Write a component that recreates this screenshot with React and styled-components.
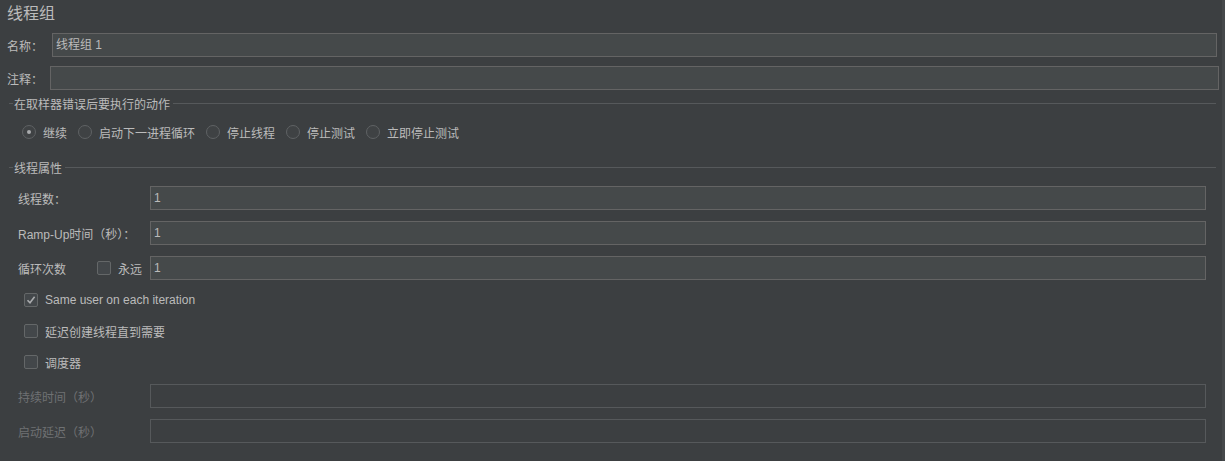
import React from "react";
import styled, { createGlobalStyle } from "styled-components";

const Global = createGlobalStyle`
  html, body { margin: 0; padding: 0; background: #3c3f41; }
  body {
    font-family: "Liberation Sans", "Noto Sans CJK SC", sans-serif;
    font-size: 12px;
    color: #bbbbbb;
  }
`;

const Page = styled.div`
  width: 1222px;
  height: 461px;
  background: #3c3f41;
  border-right: 3px solid #45484a;
  overflow: hidden;
  display: flex;
  flex-direction: column;
`;

const Title = styled.div`
  height: 28px;
  line-height: 28px;
  font-size: 16px;
  padding-left: 7px;
  color: #bbbbbb;
`;

const FieldRow = styled.div`
  display: flex;
  align-items: center;
  height: 24px;
  margin-top: ${(p) => p.$top}px;
  padding-left: 7px;
  padding-right: ${(p) => p.$right}px;
`;

const FieldLabel = styled.span`
  width: ${(p) => p.$w}px;
  flex: none;
  white-space: nowrap;
  color: #bbbbbb;
`;

const TextInput = styled.div`
  flex: 1;
  height: 24px;
  box-sizing: border-box;
  background: ${(p) => (p.$disabled ? "#3c3f41" : "#45494a")};
  border: 1px solid ${(p) => (p.$disabled ? "#56595b" : "#646464")};
  padding-left: 3px;
  line-height: 22px;
  color: #bbbbbb;
  white-space: nowrap;
`;

const Legend = styled.div`
  display: flex;
  align-items: center;
  height: 16px;
  margin-top: ${(p) => p.$top}px;
  padding-left: 9px;
  padding-right: 6px;
`;

const LegendStub = styled.div`
  width: 4px;
  height: 1px;
  background: #56595b;
  margin-right: 1px;
`;

const LegendLine = styled.div`
  flex: 1;
  height: 1px;
  background: #56595b;
  margin-left: 3px;
`;

const LegendText = styled.span`
  color: #bbbbbb;
  white-space: nowrap;
`;

const RadioRow = styled.div`
  display: flex;
  align-items: center;
  height: 20px;
  margin-top: 11px;
  padding-left: 22px;
  gap: 11px;
`;

const RadioItem = styled.label`
  display: flex;
  align-items: center;
  gap: 7px;
  white-space: nowrap;
`;

const RadioCircle = styled.span`
  width: 14px;
  height: 14px;
  box-sizing: border-box;
  border-radius: 50%;
  border: 1px solid #5f6264;
  background: #3f4244;
  display: flex;
  align-items: center;
  justify-content: center;
  &::after {
    content: "";
    width: 4px;
    height: 4px;
    border-radius: 50%;
    background: ${(p) => (p.$checked ? "#a9abad" : "transparent")};
  }
`;

const PropRow = styled.div`
  display: flex;
  align-items: center;
  height: 24px;
  margin-top: ${(p) => p.$top}px;
  padding-left: 18px;
  padding-right: 16px;
`;

const LabelCell = styled.div`
  width: 132px;
  flex: none;
  display: flex;
  align-items: center;
  white-space: nowrap;
  color: ${(p) => (p.$disabled ? "#6f7173" : "#bbbbbb")};
`;

const LoopLabel = styled.span`
  width: 79px;
  flex: none;
`;

const CheckRow = styled.div`
  display: flex;
  align-items: center;
  height: 20px;
  margin-top: ${(p) => p.$top}px;
  padding-left: 24px;
`;

const CheckItem = styled.label`
  display: flex;
  align-items: center;
  gap: 7px;
  white-space: nowrap;
  color: #bbbbbb;
`;

const Box = styled.span`
  width: 14px;
  height: 14px;
  box-sizing: border-box;
  border: 1px solid #646768;
  border-radius: 2px;
  background: #43474a;
  display: flex;
  align-items: center;
  justify-content: center;
  flex: none;
`;

const Check = ({ checked }) => (
  <Box>
    {checked && (
      <svg width="10" height="10" viewBox="0 0 10 10">
        <path d="M1.5 5.2 L4 7.8 L8.6 1.8" fill="none" stroke="#a9abad" strokeWidth="1.6" />
      </svg>
    )}
  </Box>
);

const radios = [
  { t: "继续", c: true },
  { t: "启动下一进程循环" },
  { t: "停止线程" },
  { t: "停止测试" },
  { t: "立即停止测试" },
];

export default function App() {
  return (
    <Page>
      <Global />
      <Title>线程组</Title>
      <FieldRow $top={5} $right={5}>
        <FieldLabel $w={45}>名称：</FieldLabel>
        <TextInput>线程组 1</TextInput>
      </FieldRow>
      <FieldRow $top={9} $right={3}>
        <FieldLabel $w={43}>注释：</FieldLabel>
        <TextInput />
      </FieldRow>

      <Legend $top={5}>
        <LegendStub />
        <LegendText>在取样器错误后要执行的动作</LegendText>
        <LegendLine />
      </Legend>
      <RadioRow>
        {radios.map((r) => (
          <RadioItem key={r.t}>
            <RadioCircle $checked={r.c} />
            {r.t}
          </RadioItem>
        ))}
      </RadioRow>

      <Legend $top={17}>
        <LegendStub />
        <LegendText>线程属性</LegendText>
        <LegendLine />
      </Legend>

      <PropRow $top={11}>
        <LabelCell>线程数：</LabelCell>
        <TextInput>1</TextInput>
      </PropRow>
      <PropRow $top={11}>
        <LabelCell>Ramp-Up时间（秒）：</LabelCell>
        <TextInput>1</TextInput>
      </PropRow>
      <PropRow $top={11}>
        <LabelCell>
          <LoopLabel>循环次数</LoopLabel>
          <CheckItem>
            <Check />
            永远
          </CheckItem>
        </LabelCell>
        <TextInput>1</TextInput>
      </PropRow>

      <CheckRow $top={10}>
        <CheckItem>
          <Check checked />
          Same user on each iteration
        </CheckItem>
      </CheckRow>
      <CheckRow $top={11}>
        <CheckItem>
          <Check />
          延迟创建线程直到需要
        </CheckItem>
      </CheckRow>
      <CheckRow $top={11}>
        <CheckItem>
          <Check />
          调度器
        </CheckItem>
      </CheckRow>

      <PropRow $top={12}>
        <LabelCell $disabled>持续时间（秒）</LabelCell>
        <TextInput $disabled />
      </PropRow>
      <PropRow $top={11}>
        <LabelCell $disabled>启动延迟（秒）</LabelCell>
        <TextInput $disabled />
      </PropRow>
    </Page>
  );
}
